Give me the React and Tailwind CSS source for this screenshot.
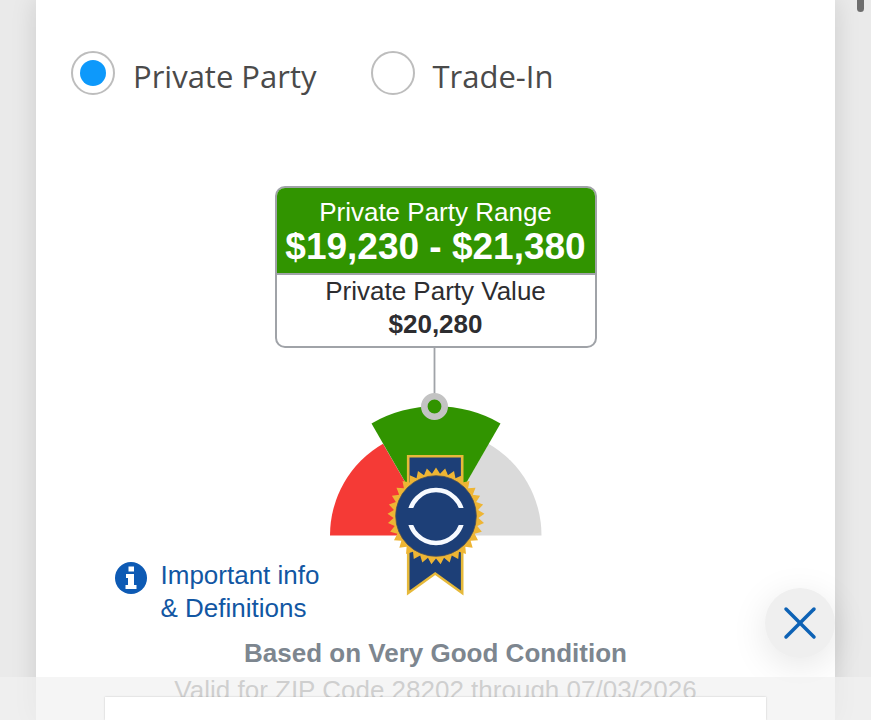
import { useState } from "react";
import { X } from "lucide-react";

const OPTIONS = [
  { id: "private", label: "Private Party" },
  { id: "trade", label: "Trade-In" },
];

// Zigzag edge of the rosette
const TEETH = 33;
const rosette = Array.from({ length: TEETH * 2 }, (_, i) => {
  const angle = (i * Math.PI) / TEETH - Math.PI / 2;
  const r = i % 2 === 0 ? 48.5 : 42.5;
  return `${106 + r * Math.cos(angle)},${168 + r * Math.sin(angle)}`;
}).join(" ");

const InfoIcon = () => (
  <svg
    viewBox="0 0 32 32"
    fill="none"
    className="mt-[3px] size-8 shrink-0"
    aria-hidden="true"
  >
    <circle cx="16" cy="16" r="16" fill="#0d5ab4" />
    <path
      d="M13.500 4.500H19V9.500H13.500ZM11 12H19V23H21.500V27H10.500V23H13V16H11Z"
      fill="#fff"
    />
  </svg>
);

const PriceGauge = () => (
  <svg width="212" height="250" viewBox="0 0 212 250" aria-hidden="true">
    <defs>
      <clipPath id="seal-top">
        <rect x="70" y="130" width="72" height="30" />
      </clipPath>
      <clipPath id="seal-bottom">
        <rect x="70" y="177" width="72" height="30" />
      </clipPath>
    </defs>

    {/* Dial */}
    <path d="M106 187.5H0A106 106 0 0 1 53 95.7Z" fill="#f53a36" />
    <path d="M106 187.5H211.5A106 106 0 0 0 158.5 95.7Z" fill="#dadada" />
    <path d="M106 187.5L41.500 75.5A129 129 0 0 1 170.5 75.5Z" fill="#319400" />

    {/* Pointer */}
    <line x1="104.5" y1="0" x2="104.5" y2="48" stroke="#a0a3a8" strokeWidth="1.8" />
    <circle cx="104.5" cy="58.5" r="10.2" fill="#319400" stroke="#c3c3c3" strokeWidth="6.6" />

    {/* Ribbon */}
    <path
      d="M78.2 108.3H132.2V245L105.2 225.5L78.2 245Z"
      fill="#1d3f77"
      stroke="#e6b93a"
      strokeWidth="2.6"
    />
    <polygon points={rosette} fill="#eeb534" />
    <circle cx="106" cy="168" r="40.3" fill="#1d3f77" stroke="#4c4f55" strokeWidth="0.8" />
    <g fill="none" stroke="#f7faff" strokeWidth="4.6">
      <circle cx="106" cy="168.5" r="26.5" clipPath="url(#seal-top)" />
      <circle cx="106" cy="168.5" r="26.5" clipPath="url(#seal-bottom)" />
    </g>
  </svg>
);

const App = () => {
  const [type, setType] = useState("private");

  return (
    <div className="relative flex min-h-screen flex-col overflow-hidden bg-[#eaeaea] px-9 font-['Liberation_Sans',Arial,sans-serif] text-[26px]">
      <main className="flex-1 bg-white pt-[51px] shadow-[0_0_24px_rgba(0,0,0,0.13)]">
        <fieldset className="flex gap-[54px] pl-[35px] font-['Open_Sans',sans-serif] text-[31px] leading-[50px] text-[#4a4a4a]">
          {OPTIONS.map((option) => (
            <label key={option.id} className="flex items-start gap-[18px]">
              <input
                type="radio"
                name="value-type"
                value={option.id}
                checked={type === option.id}
                onChange={() => setType(option.id)}
                className="size-11 shrink-0 appearance-none rounded-full border-2 border-[#bdbdbd] bg-white bg-clip-content p-[7px] checked:bg-[#0d99fb]"
              />
              {option.label}
            </label>
          ))}
        </fieldset>

        {/* Price card */}
        <section className="mx-auto mt-[85px] w-[322px] overflow-hidden rounded-[10px] border-2 border-[#a0a3a8] text-center">
          <div className="border-b-2 border-[#a0a3a8] bg-[#319400] pt-[9px] pb-[6px] text-white">
            <h2 className="leading-[30px]">Private Party Range</h2>
            <p className="text-[37px] leading-[40px] font-bold whitespace-nowrap">$19,230 - $21,380</p>
          </div>
          <div className="pb-[5px] leading-[33px] text-[#2d2d30]">
            <h3>Private Party Value</h3>
            <p className="font-bold">$20,280</p>
          </div>
        </section>

        <div className="grid grid-cols-[1fr_auto_1fr] pb-[27px]">
          <a
            href="#definitions"
            className="-mb-[27px] flex items-start gap-[14px] self-end justify-self-end pr-[10px] leading-[33px] text-[#1257a3]"
          >
            <InfoIcon />
            <span>
              Important info
              <br />
              &amp; Definitions
            </span>
          </a>
          <PriceGauge />
        </div>

        <div className="mt-[10px] text-center leading-[37px]">
          <p className="font-bold text-[#7d868f]">Based on Very Good Condition</p>
          <p className="text-[#808080]">Valid for ZIP Code 28202 through 07/03/2026</p>
        </div>
      </main>

      {/* Scroll thumb */}
      <div className="absolute top-0 right-[7px] h-3 w-[7px] rounded-b-full bg-[#6e6e6e]" />

      <button
        type="button"
        aria-label="Close"
        className="fixed right-9 bottom-[62px] flex size-[70px] items-center justify-center rounded-full bg-[#efefef] text-[#0d62b5] shadow-[0_8px_36px_rgba(0,0,0,0.1)]"
      >
        <X size={56} strokeWidth={1.5} />
      </button>

      {/* Ad banner */}
      <aside className="fixed inset-x-0 bottom-0 flex h-[43px] justify-center bg-[#f1f1f1]/70 pt-5">
        <div className="w-[76%] bg-white shadow-[0_0_2px_rgba(0,0,0,0.2)]" />
      </aside>
    </div>
  );
};

export default App;
